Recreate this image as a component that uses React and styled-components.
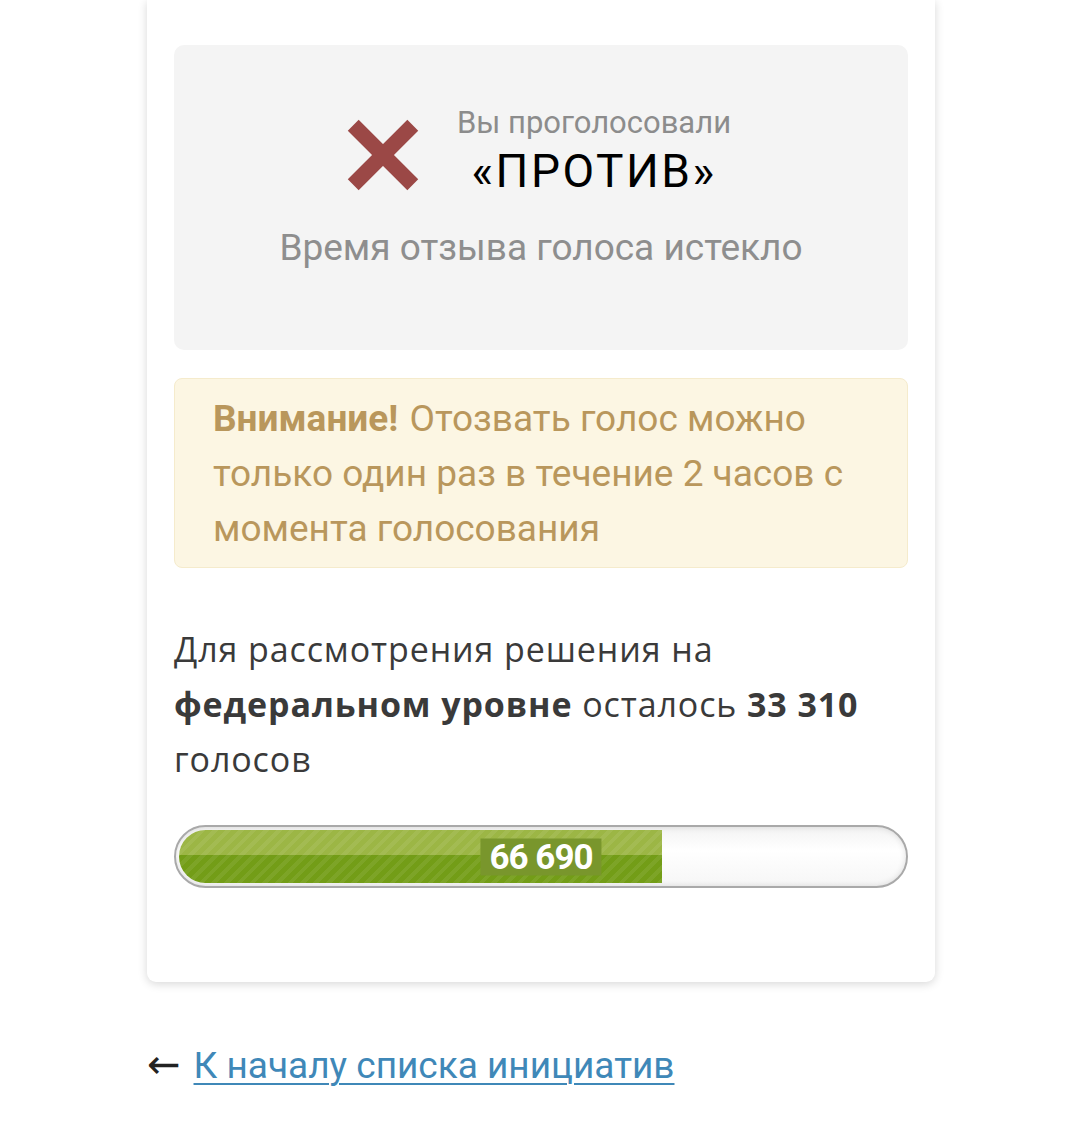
import React from "react";
import styled, { createGlobalStyle } from "styled-components";

// ********
// component
// ********

const TOTAL = 100000;
const COLLECTED = 66690;

export default function App() {
	const percent = (COLLECTED / TOTAL) * 100;

	return (
		<>
			<GlobalStyle />
			<Page>
				<Card>
					<VoteBox>
						<VoteRow>
							<CrossIcon viewBox="0 0 74 74" aria-hidden="true">
								<path d="M8 8 L66 66 M66 8 L8 66" />
							</CrossIcon>
							<VoteText>
								<VoteCaption>Вы проголосовали</VoteCaption>
								<VoteValue>«ПРОТИВ»</VoteValue>
							</VoteText>
						</VoteRow>
						<Expired>Время отзыва голоса истекло</Expired>
					</VoteBox>

					<Warning>
						<strong>Внимание!</strong> Отозвать голос можно только один раз в
						течение 2 часов с момента голосования
					</Warning>

					<Remaining>
						Для рассмотрения решения на <strong>федеральном уровне</strong>{" "}
						осталось <strong>33 310</strong> голосов
					</Remaining>

					<Progress>
						<ProgressFill style={{ width: `${percent}%` }} />
						<ProgressLabel>66 690</ProgressLabel>
					</Progress>
				</Card>

				<Back>
					<Arrow>←</Arrow>
					<BackLink href="#">К началу списка инициатив</BackLink>
				</Back>
			</Page>
		</>
	);
}

// ********
// styles
// ********

const GlobalStyle = createGlobalStyle`
	body {
		margin: 0;
		background: #fff;
		font-family: Roboto, "Noto Sans", sans-serif;
	}
`;
const Page = styled.div`
	width: 788px;
	padding: 0 0 40px 147px;
`;
const Card = styled.div`
	box-sizing: border-box;
	background: #fff;
	border-radius: 0 0 9px 9px;
	box-shadow: 0 2px 10px rgba(0, 0, 0, 0.16);
	padding: 45px 27px 94px;
`;
const VoteBox = styled.div`
	box-sizing: border-box;
	height: 305px;
	background: #f4f4f4;
	border-radius: 10px;
	padding-top: 58px;
	display: flex;
	flex-direction: column;
	align-items: center;
`;
const VoteRow = styled.div`
	display: flex;
	align-items: center;
	gap: 36px;
	margin-left: -6px;
`;
const CrossIcon = styled.svg`
	width: 76px;
	height: 76px;
	margin-top: 8px;
	path {
		stroke: #9b4846;
		stroke-width: 15;
		fill: none;
	}
`;
const VoteText = styled.div`
	display: flex;
	flex-direction: column;
	align-items: center;
`;
const VoteCaption = styled.div`
	font-size: 31px;
	line-height: 40px;
	color: #8c8c8c;
`;
const VoteValue = styled.div`
	font-size: 46px;
	line-height: 56px;
	letter-spacing: 2.5px;
	color: #000;
`;
const Expired = styled.div`
	margin-top: 25px;
	font-size: 37px;
	line-height: 48px;
	color: #8e8e8e;
`;
const Warning = styled.div`
	margin-top: 28px;
	box-sizing: border-box;
	background: #fcf6e3;
	border: 1px solid #f5ebcc;
	border-radius: 8px;
	padding: 12px 38px 11px;
	font-size: 37px;
	line-height: 55px;
	color: #b9975c;
	strong {
		font-weight: 700;
		margin-right: 2px;
	}
`;
const Remaining = styled.div`
	margin-top: 54px;
	font-family: "Open Sans", sans-serif;
	font-size: 34px;
	letter-spacing: 0.9px;
	line-height: 55px;
	color: #3a3a3a;
	strong {
		font-weight: 700;
	}
`;
const Progress = styled.div`
	position: relative;
	margin-top: 38px;
	height: 63px;
	box-sizing: border-box;
	border: 2px solid #a9a9a9;
	border-radius: 32px;
	padding: 3px;
	background: linear-gradient(#f3f3f3, #fff 40%, #f6f6f6);
	box-shadow: inset 0 0 6px rgba(0, 0, 0, 0.12);
	overflow: hidden;
`;
const ProgressFill = styled.div`
	height: 100%;
	border-radius: 28px 0 0 28px;
	background:
		repeating-linear-gradient(
			-45deg,
			rgba(255, 255, 255, 0.07) 0 4px,
			rgba(0, 0, 0, 0) 4px 9px
		),
		linear-gradient(#9cb645 0, #9cb645 47%, #739d17 47%, #739d17 100%);
`;
const ProgressLabel = styled.span`
	position: absolute;
	left: 50%;
	top: 50%;
	transform: translate(-50%, -50%);
	background: #79962c;
	color: #fff;
	font-weight: 700;
	font-size: 35px;
	letter-spacing: -1px;
	line-height: 37px;
	padding: 0 9px;
`;
const Back = styled.div`
	margin-top: 57px;
	display: flex;
	align-items: baseline;
	gap: 13px;
	font-size: 37px;
	line-height: 50px;
`;
const Arrow = styled.span`
	color: #222;
	font-family: "DejaVu Sans", sans-serif;
	font-size: 40px;
`;
const BackLink = styled.a`
	color: #3f88b8;
	text-decoration: underline;
	text-underline-offset: 5px;
	text-decoration-thickness: 2px;
`;
